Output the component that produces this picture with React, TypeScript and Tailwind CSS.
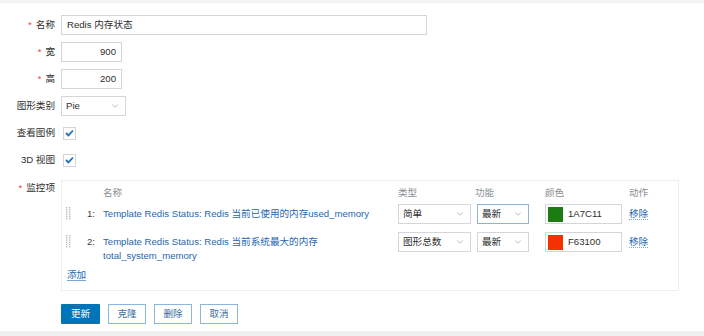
import { ChevronDown } from 'lucide-react'

const font = { fontFamily: '"Liberation Sans", "Noto Sans CJK SC", sans-serif' }

function Label({ text, required }: { text: string; required?: boolean }) {
  return (
    <div className="flex h-[20px] items-center justify-end text-[9.6px] text-[#2e2e2e]">
      {required && <span className="mr-[4px] text-[#e0463b]">*</span>}
      {text}
    </div>
  )
}

function Select({ value, w, focus }: { value: string; w: string; focus?: boolean }) {
  return (
    <div
      className={`flex h-[20px] items-center justify-between border bg-white pl-[4px] pr-[5px] text-[9.6px] text-[#2e2e2e] ${w} ${
        focus ? 'border-[#8db3d6]' : 'border-[#d2d6da]'
      }`}
    >
      <span>{value}</span>
      <ChevronDown className="h-[10px] w-[10px] text-[#8a8f94]" strokeWidth={1.4} />
    </div>
  )
}

function Check() {
  return (
    <div className="flex h-[20px] items-center">
      <div className="ml-[2px] flex h-[13px] w-[13px] items-center justify-center border border-[#d2d6da] bg-white">
        <svg width="9" height="8" viewBox="0 0 9 8">
          <path d="M1 4l2.4 2.4L8 1.5" fill="none" stroke="#1d6fbd" strokeWidth="1.8" />
        </svg>
      </div>
    </div>
  )
}

function Grip() {
  const dots = []
  for (let r = 0; r < 6; r++) {
    for (let c = 0; c < 2; c++) {
      dots.push(<rect key={`${r}-${c}`} x={c * 3} y={r * 2.2} width="1.4" height="1.4" fill="#b9bec3" />)
    }
  }
  return (
    <svg width="5" height="13" viewBox="0 0 5 13">
      {dots}
    </svg>
  )
}

function ItemRow({
  n,
  name,
  type,
  color,
  hex,
  focus,
}: {
  n: string
  name: React.ReactNode
  type: string
  color: string
  hex: string
  focus?: boolean
}) {
  return (
    <div className="flex items-start text-[9.6px]">
      <div className="flex w-[8px] pt-[3px]">
        <Grip />
      </div>
      <div className="h-[20px] w-[29px] pr-[8px] text-right leading-[20px] text-[#444]">{n}</div>
      <div className="w-[295px] pt-[3px] leading-[14px] text-[#1f67b1]">{name}</div>
      <div className="w-[79px]">
        <Select value={type} w="w-[73px]" />
      </div>
      <div className="w-[68px]">
        <Select value="最新" w="w-[52px]" focus={focus} />
      </div>
      <div className="w-[84px]">
        <div className="flex h-[20px] w-[77px] items-center border border-[#d2d6da] bg-white pl-[2px] text-[#2e2e2e]">
          <span className="mr-[5px] h-[15px] w-[15px]" style={{ backgroundColor: color }} />
          {hex}
        </div>
      </div>
      <div className="h-[20px] leading-[20px]">
        <span className="border-b border-dotted border-[#7aa6d2] text-[#1f67b1]">移除</span>
      </div>
    </div>
  )
}

export default function App() {
  return (
    <div className="flex h-[336px] w-[704px] flex-col overflow-hidden bg-white" style={font}>
      <div className="h-[3px] bg-[#f3f4f5]" />
      <div className="grid grid-cols-[55px_1fr] gap-x-[6px] gap-y-[7px] pt-[12px]">
        <Label text="名称" required />
        <div className="flex h-[20px] w-[366px] items-center border border-[#d2d6da] pl-[5px] text-[9.6px] text-[#2e2e2e]">
          Redis 内存状态
        </div>

        <Label text="宽" required />
        <div className="flex h-[20px] w-[61px] items-center justify-end border border-[#d2d6da] pr-[5px] text-[9.6px] text-[#2e2e2e]">
          900
        </div>

        <Label text="高" required />
        <div className="flex h-[20px] w-[61px] items-center justify-end border border-[#d2d6da] pr-[5px] text-[9.6px] text-[#2e2e2e]">
          200
        </div>

        <Label text="图形类别" />
        <Select value="Pie" w="w-[65px]" />

        <Label text="查看图例" />
        <Check />

        <Label text="3D 视图" />
        <Check />

        <div className="pt-[1px]">
          <Label text="监控项" required />
        </div>
        <div className="mt-[3px] h-[111px] w-[618px] border border-[#eceef0] pl-[4px] pt-[4px]">
          <div className="flex h-[16px] items-center text-[9.6px] text-[#8a8f94]">
            <div className="w-[37px]" />
            <div className="w-[295px]">名称</div>
            <div className="w-[77px]">类型</div>
            <div className="w-[70px]">功能</div>
            <div className="w-[84px]">颜色</div>
            <div>动作</div>
          </div>
          <div className="mt-[3px] flex flex-col gap-[8px]">
            <ItemRow
              n="1:"
              name="Template Redis Status: Redis 当前已使用的内存used_memory"
              type="简单"
              color="#1A7C11"
              hex="1A7C11"
              focus
            />
            <ItemRow
              n="2:"
              name={
                <>
                  Template Redis Status: Redis 当前系统最大的内存
                  <br />
                  total_system_memory
                </>
              }
              type="图形总数"
              color="#F63100"
              hex="F63100"
            />
          </div>
          <div className="mt-[5px] pl-[1px] text-[9.6px]">
            <span className="border-b border-[#7aa6d2] text-[#1f67b1]">添加</span>
          </div>
        </div>
      </div>

      <div className="ml-[61px] mt-[13px] flex gap-[8px] text-[9.6px]">
        <button className="h-[20px] w-[39px] rounded-[1px] bg-[#0275b8] text-white">更新</button>
        <button className="h-[20px] w-[38px] border border-[#8ab6dd] bg-white text-[#3c6e9c]">克隆</button>
        <button className="h-[20px] w-[38px] border border-[#8ab6dd] bg-white text-[#3c6e9c]">删除</button>
        <button className="h-[20px] w-[38px] border border-[#8ab6dd] bg-white text-[#3c6e9c]">取消</button>
      </div>
      <div className="mt-auto h-[5px] bg-[#eef0f2]" />
    </div>
  )
}
